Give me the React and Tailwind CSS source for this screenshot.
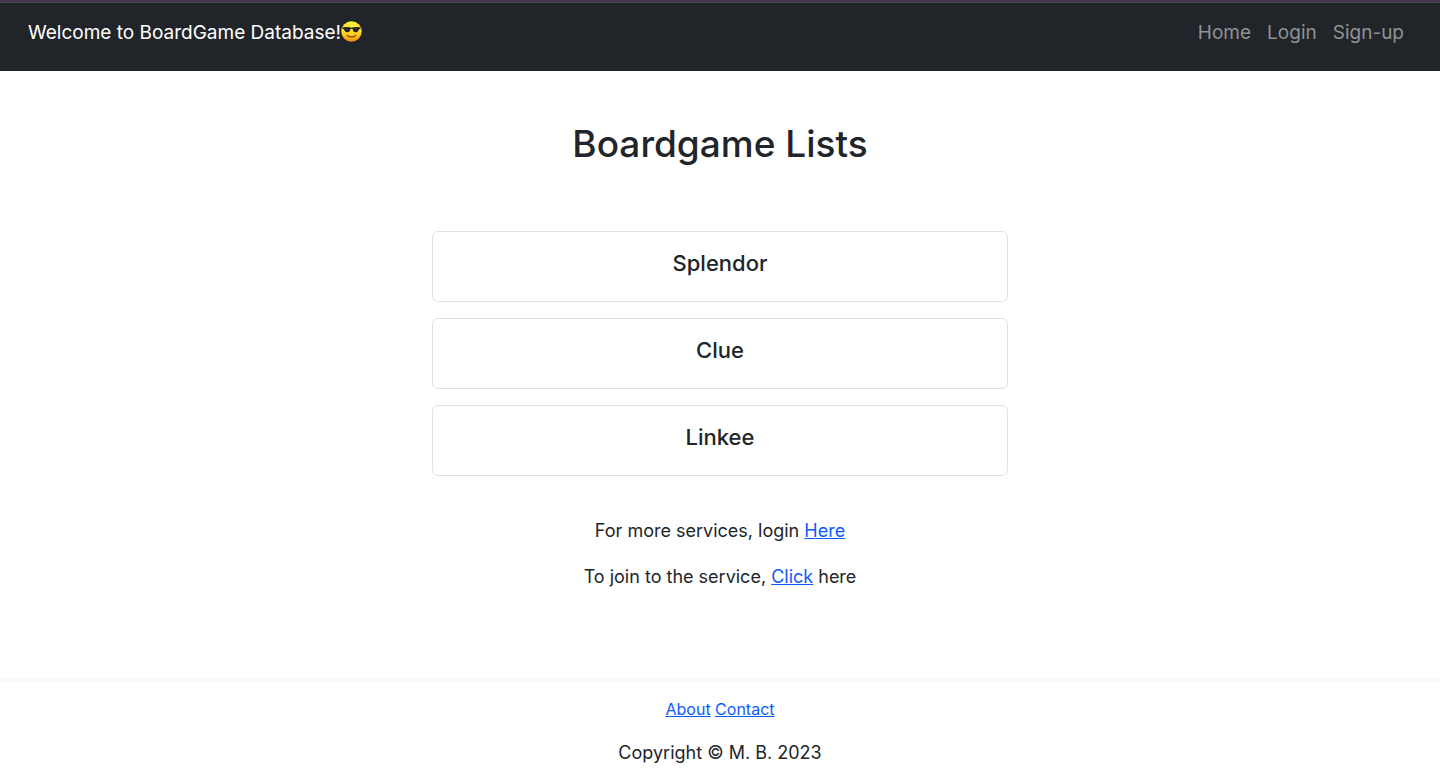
const games = ["Splendor", "Clue", "Linkee"];
const navItems = ["Home", "Login", "Sign-up"];

function SunglassesFace() {
  return (
    <svg viewBox="0 0 40 40" className="mb-1 size-[21px]" role="img" aria-label="Smiling face with sunglasses">
      <defs>
        <linearGradient id="face" x1="0" y1="0" x2="0" y2="1">
          <stop offset="0" stopColor="#fff23c" />
          <stop offset="0.6" stopColor="#ffd226" />
          <stop offset="1" stopColor="#f08a10" />
        </linearGradient>
      </defs>
      <circle cx="20" cy="20" r="19.5" fill="url(#face)" />
      <path d="M2.500 12.500 Q10 10.500 18 12.500 Q20 13 22 12.500 Q30 10.500 37.500 12.500 L37 15 L21.500 15 Q20 14.500 18.500 15 L3 15 Z" fill="#22221c" />
      <path d="M5 13 Q12 11.500 18 13.500 Q18 21.500 12 21.500 Q6 21.500 5 13 Z" fill="#22262a" />
      <path d="M35 13 Q28 11.500 22 13.500 Q22 21.500 28 21.500 Q34 21.500 35 13 Z" fill="#22262a" />
      <path d="M12 27.500 Q20 33 28 27.500" fill="none" stroke="#8a4a08" strokeWidth="2.200" strokeLinecap="round" />
    </svg>
  );
}

function TextLink({ children }) {
  return (
    <a href="#" className="text-[#0d5bfd] underline">
      {children}
    </a>
  );
}

export default function App() {
  return (
    <div className="min-h-screen bg-white font-['Inter','Liberation_Sans',sans-serif] text-[#212529]">
      <header className="border-t-2 border-[#443250] bg-[#212529]">
        <nav className="flex items-start justify-between border-t border-[#4b4652] pt-[15px] pr-9 pb-[23px] pl-7 text-[19px] leading-[30px]">
          <a href="#" className="flex items-center text-white">
            Welcome to BoardGame Database!
            <SunglassesFace />
          </a>
          <ul className="flex gap-4">
            {navItems.map((item) => (
              <li key={item}>
                <a href="#" className="text-[#909294]">{item}</a>
              </li>
            ))}
          </ul>
        </nav>
      </header>

      <main className="pt-12 text-center">
        <h1 className="text-[37px] leading-[50px] font-medium">Boardgame Lists</h1>
        <ul className="mx-auto mt-[62px] flex w-2/5 flex-col gap-4">
          {games.map((game) => (
            <li key={game} className="rounded-md border border-[#dee2e6] px-4 pt-[17px] pb-[23px]">
              <h2 className="text-[22px] leading-[29px] font-medium">{game}</h2>
            </li>
          ))}
        </ul>
        <div className="mt-10 flex flex-col gap-4 text-lg leading-[30px]">
          <p>For more services, login <TextLink>Here</TextLink></p>
          <p>To join to the service, <TextLink>Click</TextLink> here</p>
        </div>
      </main>

      <footer className="mt-[87px] border-t-2 border-[#f8f9fa] pt-4 pb-3 text-center">
        <p className="text-base leading-6">
          <TextLink>About</TextLink> <TextLink>Contact</TextLink>
        </p>
        <p className="mt-[17px] text-lg leading-[30px]">Copyright © M. B. 2023</p>
      </footer>
    </div>
  );
}
